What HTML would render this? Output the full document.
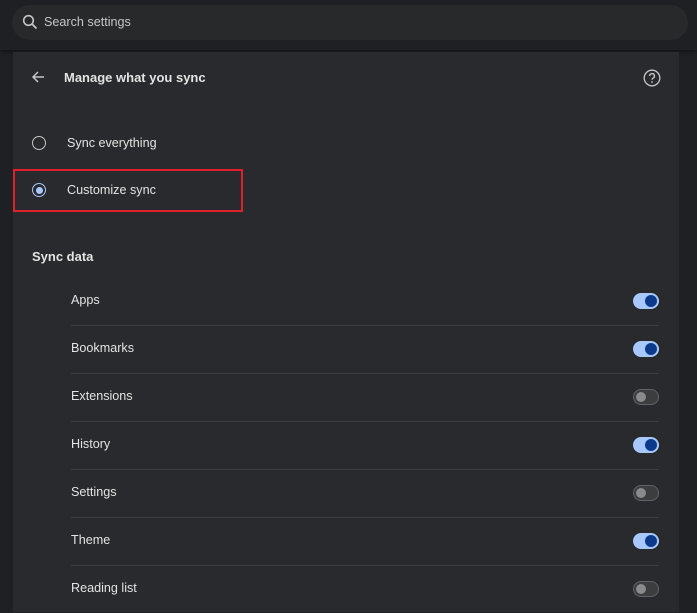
<!DOCTYPE html>
<html><head><style>
body{margin:0;width:697px;height:600px;background:#1f2023;font-family:"Liberation Sans",sans-serif;overflow:hidden;position:relative;color:#e3e3e3}
.top{position:absolute;left:0;top:0;width:697px;height:50px;background:#1f2023;box-shadow:0 2px 4px rgba(0,0,0,.4)}
.search{position:absolute;left:12px;top:5px;width:676px;height:35px;border-radius:18px;background:#28292b}
.search span{position:absolute;left:32px;top:10px;font-size:12.6px;color:#c4c7c5}
.card{position:absolute;left:13px;top:52px;width:666px;height:560px;background:#292a2d}
.t{position:absolute;font-size:12.6px;color:#e3e3e3}
.row{position:absolute;left:71px;width:588px;height:48px;border-bottom:1px solid #3c3d40}
.row span{position:absolute;left:0;top:16px;font-size:12.6px}
.tg{position:absolute;right:0;top:16px;width:26px;height:16px;border-radius:8px}
.on{background:#a8c7fa}.on::after{content:"";position:absolute;right:2px;top:2px;width:12px;height:12px;border-radius:50%;background:#0b3a8a}
.off{background:#3c3d3f;box-sizing:border-box;border:1px solid #5f6368}.off::after{content:"";position:absolute;left:2px;top:2px;width:10px;height:10px;border-radius:50%;background:#8a8b8d}
</style></head><body>
<div class="top"><div class="search">
<svg style="position:absolute;left:10px;top:9px" width="16" height="16" viewBox="0 0 16 16"><circle cx="6.5" cy="6.5" r="4.8" fill="none" stroke="#c4c7c5" stroke-width="1.6"/><path d="M10 10l4.5 4.5" stroke="#c4c7c5" stroke-width="1.8"/></svg>
<span>Search settings</span></div></div>
<div class="card">
<svg style="position:absolute;left:17px;top:17px" width="16" height="16" viewBox="0 0 16 16"><path d="M14 8H3M8 3L3 8l5 5" fill="none" stroke="#c4c7c5" stroke-width="1.5"/></svg>
<div class="t" style="left:51px;top:18px;font-weight:bold;font-size:13px">Manage what you sync</div>
<svg style="position:absolute;left:629px;top:16px" width="20" height="20" viewBox="0 0 20 20"><circle cx="10" cy="10" r="7.8" fill="none" stroke="#c4c7c5" stroke-width="1.3"/><path d="M7.6 8a2.4 2.4 0 1 1 3.4 2.2c-.7.4-1 .8-1 1.6" fill="none" stroke="#c4c7c5" stroke-width="1.4"/><circle cx="10" cy="14" r=".9" fill="#c4c7c5"/></svg>
<div style="position:absolute;left:19px;top:84px;width:12px;height:12px;border:1.5px solid #c4c7c5;border-radius:50%"></div>
<div class="t" style="left:54px;top:84px">Sync everything</div>
<div style="position:absolute;left:19px;top:131px;width:12px;height:12px;border:1.5px solid #a8c7fa;border-radius:50%"><div style="margin:2.5px;width:7px;height:7px;border-radius:50%;background:#a8c7fa"></div></div>
<div class="t" style="left:54px;top:131px">Customize sync</div>
<div style="position:absolute;left:0;top:117px;width:226px;height:39px;border:2.5px solid #e0202a"></div>
<div class="t" style="left:19px;top:197px;font-weight:bold;font-size:13px">Sync data</div>
</div>
<div class="row" style="top:277px"><span>Apps</span><div class="tg on"></div></div>
<div class="row" style="top:325px"><span>Bookmarks</span><div class="tg on"></div></div>
<div class="row" style="top:373px"><span>Extensions</span><div class="tg off"></div></div>
<div class="row" style="top:421px"><span>History</span><div class="tg on"></div></div>
<div class="row" style="top:469px"><span>Settings</span><div class="tg off"></div></div>
<div class="row" style="top:517px"><span>Theme</span><div class="tg on"></div></div>
<div class="row" style="top:565px;border:0"><span>Reading list</span><div class="tg off"></div></div>
</body></html>
